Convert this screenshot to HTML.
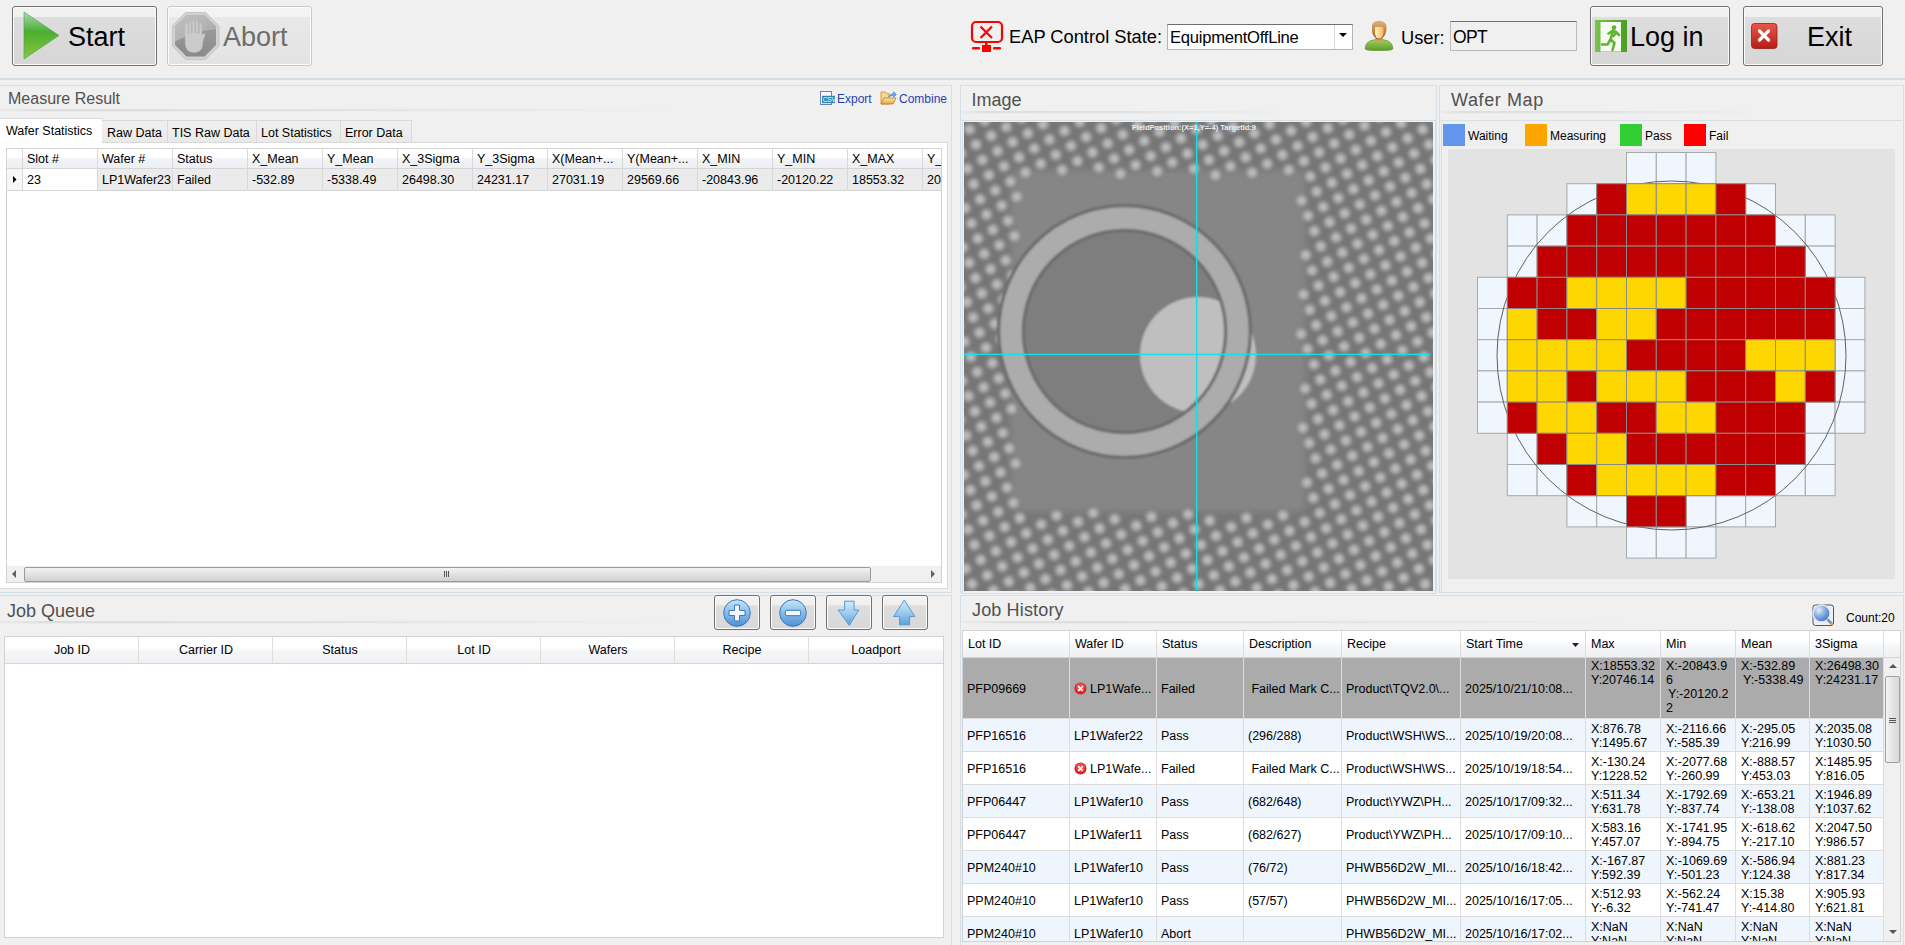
<!DOCTYPE html>
<html><head><meta charset="utf-8">
<style>
*{box-sizing:border-box;margin:0;padding:0}
html,body{width:1905px;height:945px;overflow:hidden;background:#f0f0f0;font-family:"Liberation Sans",sans-serif;color:#000}
.a{position:absolute}
.btn{position:absolute;border:1px solid #707070;border-radius:3px;background:linear-gradient(#f2f2f2 0,#f0f0f0 17%,#dddddd 18%,#d6d6d6 100%);box-shadow:inset 0 0 0 1px #fcfcfc}
.btn.dis{border-color:#c9c9c9;background:linear-gradient(#f4f4f4 0,#f2f2f2 17%,#e8e8e8 18%,#e3e3e3 100%)}
.bt{position:absolute;font-size:27px;line-height:27px;white-space:nowrap}
.panel{position:absolute;border:1px solid #d5dfe8;background:#f0f0f0}
.ptitle{position:absolute;font-size:16px;color:#505050;white-space:nowrap;line-height:20px}
.shadow{position:absolute;height:4px;background:linear-gradient(90deg,rgba(0,0,0,.03) 0,rgba(0,0,0,.11) 5%,rgba(0,0,0,.08) 35%,rgba(0,0,0,0) 72%);-webkit-mask-image:linear-gradient(rgba(0,0,0,.4) 0,#000 25%,rgba(0,0,0,.35) 50%,rgba(0,0,0,.1) 75%,rgba(0,0,0,0) 100%)}
.t12{font-size:12px;white-space:nowrap}
</style></head><body>
<!-- toolbar -->
<div class="btn" style="left:12px;top:6px;width:145px;height:60px"></div>
<svg class="a" style="left:20px;top:8px" width="44" height="56" viewBox="0 0 44 56">
<defs><linearGradient id="gPlay" x1="0" y1="0" x2="0" y2="1"><stop offset="0" stop-color="#a7d8b4"/><stop offset=".42" stop-color="#4cae2f"/><stop offset="1" stop-color="#8cc63f"/></linearGradient></defs>
<path d="M4 4 L39 27.5 L4 51 Z" fill="url(#gPlay)" stroke="#3ea55a" stroke-width=".6"/>
</svg>
<div class="bt" style="left:68px;top:24px">Start</div>

<div class="btn dis" style="left:167px;top:6px;width:145px;height:60px"></div>
<svg class="a" style="left:172px;top:12px" width="48" height="48" viewBox="0 0 48 48">
<defs><linearGradient id="gOct" x1="0" y1="0" x2="0" y2="1"><stop offset="0" stop-color="#a2a2a2"/><stop offset="1" stop-color="#8a8a8a"/></linearGradient>
<linearGradient id="gOct2" x1="0" y1="0" x2="1" y2="1"><stop offset="0" stop-color="#c4c4c4"/><stop offset="1" stop-color="#a6a6a6"/></linearGradient>
<clipPath id="cOct"><path d="M14.5 3 L32.5 3 L44 14.5 L44 33 L32.5 44.5 L14.5 44.5 L3 33 L3 14.5 Z"/></clipPath></defs>
<path d="M13.5 0.5 L33.5 0.5 L47 14 L47 34 L33.5 47.5 L13.5 47.5 L0.5 34 L0.5 14 Z" fill="#d2d2d2" stroke="#c4c4c4" stroke-width="1"/>
<path d="M14.5 3 L32.5 3 L44 14.5 L44 33 L32.5 44.5 L14.5 44.5 L3 33 L3 14.5 Z" fill="url(#gOct)"/>
<path d="M0 0 L48 0 L48 17 Q30 18 20 22 Q10 26 2 30 Z" fill="url(#gOct2)" clip-path="url(#cOct)"/>
<path d="M13 12 L13 23 L13.5 34 Q15 40.5 22 40.5 Q29 40.5 30.5 34 L31 28 L33 23.5 Q33.5 21.5 32 21.5 L30 23 L29.5 12 Q28.5 10.5 27.5 12 L27.5 21 L26 21 L26 9.5 Q25 8 24 9.5 L24 21 L22.5 21 L22.5 9 Q21.5 7.5 20.5 9 L20.5 21 L19 21 L19 10.5 Q18 9 17 10.5 L17 22 L16 22 L16 12 Q14.5 10.5 13 12 Z" fill="#cbcbcb" stroke="#bdbdbd" stroke-width=".5"/>
</svg>
<div class="bt" style="left:223px;top:24px;color:#6d6d6d">Abort</div>

<svg class="a" style="left:970px;top:20px" width="34" height="34" viewBox="0 0 34 34">
<rect x="2" y="2" width="30" height="20" rx="4" fill="none" stroke="#ff0000" stroke-width="2.2"/>
<path d="M10.5 6.5 L22 18 M22 6.5 L10.5 18" stroke="#ff0000" stroke-width="2.2"/>
<rect x="15" y="22" width="2.5" height="3" fill="#ff0000"/>
<rect x="12" y="25" width="9" height="7" fill="#ff0000"/>
<rect x="2" y="27" width="8" height="2.5" rx="1" fill="#ff0000"/>
<rect x="23" y="27" width="8" height="2.5" rx="1" fill="#ff0000"/>
</svg>
<div class="a" style="left:1009px;top:27px;font-size:18.3px;line-height:20px;white-space:nowrap">EAP Control State:</div>
<div class="a" style="left:1167px;top:24px;width:186px;height:26px;border:1px solid #b4b4b4;border-top-color:#6e6e6e;background:#fff"></div>
<div class="a" style="left:1334px;top:25px;width:1px;height:24px;background:#d9d9d9"></div>
<svg class="a" style="left:1339px;top:33px" width="9" height="5"><path d="M0 0 L8 0 L4 4 Z" fill="#000"/></svg>
<div class="a" style="left:1170px;top:28px;font-size:16.6px;line-height:20px;white-space:nowrap;letter-spacing:-0.25px">EquipmentOffLine</div>

<svg class="a" style="left:1362px;top:19px" width="34" height="34" viewBox="0 0 34 34">
<defs><linearGradient id="gBody" x1="0" y1="0" x2="0" y2="1"><stop offset="0" stop-color="#9fd060"/><stop offset="1" stop-color="#5f9a26"/></linearGradient>
<linearGradient id="gFace" x1="0" y1="0" x2="1" y2="0"><stop offset="0" stop-color="#fff3c8"/><stop offset="1" stop-color="#f2b85a"/></linearGradient>
<linearGradient id="gHair" x1="0" y1="0" x2="0" y2="1"><stop offset="0" stop-color="#e2b47a"/><stop offset="1" stop-color="#a55a1c"/></linearGradient></defs>
<path d="M3.2 30 Q3 24 9 21.5 L14 20.5 L20 20.5 L25 21.5 Q31 24 30.8 30 Q30 31.5 17 31.5 Q4 31.5 3.2 30 Z" fill="url(#gBody)" stroke="#4f8a1c" stroke-width=".6"/>
<path d="M13.5 17 L13.8 21.5 Q17 23.5 20.2 21.5 L20.5 17 Z" fill="#d49a5e"/>
<path d="M10 9 Q9 2 17 1.8 Q25 2 24.5 9 Q24.5 15 21.5 18 Q19.5 20.5 17 20.5 Q14.5 20.5 12.5 18 Q9.5 15 10 9 Z" fill="url(#gHair)"/>
<path d="M13 8.5 Q17 7.2 21.5 8.5 L21.5 14 Q20.5 19.5 17 19.5 Q13.5 19.5 13 14 Z" fill="url(#gFace)"/>
</svg>
<div class="a" style="left:1401px;top:27.5px;font-size:18.3px;line-height:20px;white-space:nowrap">User:</div>
<div class="a" style="left:1450px;top:21px;width:127px;height:30px;border:1px solid #bcbcbc;border-top-color:#6e6e6e;background:#f0f0f0"></div>
<div class="a" style="left:1453px;top:27px;font-size:17.5px;line-height:20px;white-space:nowrap;letter-spacing:-0.6px">OPT</div>

<div class="btn" style="left:1590px;top:6px;width:140px;height:60px"></div>
<svg class="a" style="left:1595px;top:20px" width="32" height="32" viewBox="0 0 32 32">
<defs><linearGradient id="gEx" x1="0" y1="0" x2="1" y2="0"><stop offset="0" stop-color="#7cc24a"/><stop offset="1" stop-color="#4a9e22"/></linearGradient></defs>
<rect x="0" y="0" width="32" height="32" fill="url(#gEx)"/>
<rect x="5.5" y="2" width="20.5" height="29.5" fill="#f6fbf2"/>
<circle cx="19" cy="7.6" r="2.3" fill="#5fb52f"/>
<path d="M13.5 13.5 L18 10.5 L21.5 12.5 L24 15 M18 10.5 L15.5 19.5 L19.5 23 L17.5 30 M15.5 19.5 L12.5 24.5 L7 24.5 M21.5 12.5 L18.5 16" stroke="#5fb52f" stroke-width="2.6" fill="none" stroke-linecap="round" stroke-linejoin="round"/>
</svg>
<div class="bt" style="left:1630px;top:24px">Log in</div>

<div class="btn" style="left:1743px;top:6px;width:140px;height:60px"></div>
<svg class="a" style="left:1751px;top:23px" width="27" height="26" viewBox="0 0 27 26">
<defs><linearGradient id="gX" x1="0" y1="0" x2="0" y2="1"><stop offset="0" stop-color="#e8574c"/><stop offset="1" stop-color="#b51d16"/></linearGradient></defs>
<rect x=".5" y=".5" width="25.5" height="25" rx="3" fill="url(#gX)" stroke="#9c1a14" stroke-width=".8"/>
<path d="M8.5 8 L17.5 17 M17.5 8 L8.5 17" stroke="#fff" stroke-width="3.2" stroke-linecap="round"/>
</svg>
<div class="bt" style="left:1807px;top:24px">Exit</div>

<div class="a" style="left:0;top:78px;width:1905px;height:2px;background:#d4dee6"></div>

<!-- PANELS -->
<div class="a" style="left:-1px;top:85px;width:953px;height:508px;border:1px solid #d5dfe8;background:#f0f0f0"></div>
<div class="ptitle" style="left:8px;top:89px">Measure Result</div>
<div class="shadow" style="left:0;top:109px;width:950px"></div>
<svg class="a" style="left:820px;top:91px" width="17" height="15" viewBox="0 0 17 15">
<rect x=".5" y=".5" width="11" height="13" fill="#f8f8fc" stroke="#7080b8"/><rect x="2" y="4.8" width="13" height="7.4" fill="#2e88b4"/><text x="2.8" y="11" font-size="6.6" fill="#fff" font-family="Liberation Sans" letter-spacing="-.2">CSV</text></svg>
<div class="a t12" style="left:837px;top:92px;color:#2b3fb0;line-height:14px">Export</div>
<svg class="a" style="left:880px;top:90px" width="18" height="16" viewBox="0 0 18 16">
<defs><linearGradient id="gFo" x1="0" y1="0" x2="0" y2="1"><stop offset="0" stop-color="#fde9a8"/><stop offset="1" stop-color="#e9a03c"/></linearGradient></defs>
<path d="M1 2 L5.5 2 L7 3.5 L9 3.5 L9 14 L1 14 Z" fill="#f6d88a" stroke="#d18a2e" stroke-width=".8"/><path d="M1 14 L4 8 L16 8 L13 14 Z" fill="url(#gFo)" stroke="#c47a25" stroke-width=".8"/><path d="M8.5 7 Q10 3.5 13.5 3.5 L13.5 1.5 L16.5 4.5 L13.5 7.5 L13.5 5.5 Q11 5.5 8.5 7 Z" fill="#6aa8e0" stroke="#3f7fc0" stroke-width=".5"/></svg>
<div class="a t12" style="left:899px;top:92px;color:#2b3fb0;line-height:14px">Combine</div>
<div class="a" style="left:0;top:142px;width:948px;height:447px;border:1px solid #d9d9d9;border-left:none;background:#fff"></div>
<div class="a" style="left:-1px;top:118px;width:104px;height:25px;border:1px solid #d9d9d9;border-bottom:none;background:#fff"></div>
<div class="a" style="left:6px;top:122.5px;font-size:12.5px;line-height:16px;white-space:nowrap">Wafer Statistics</div>
<div class="a" style="left:102px;top:120px;width:66px;height:23px;border:1px solid #d9d9d9;border-left:none;background:linear-gradient(#f0f0f0,#e9e9e9)"></div>
<div class="a" style="left:107px;top:124.5px;font-size:12.5px;line-height:16px;white-space:nowrap">Raw Data</div>
<div class="a" style="left:167px;top:120px;width:90px;height:23px;border:1px solid #d9d9d9;border-left:1px solid #d9d9d9;background:linear-gradient(#f0f0f0,#e9e9e9)"></div>
<div class="a" style="left:172px;top:124.5px;font-size:12.5px;line-height:16px;white-space:nowrap">TIS Raw Data</div>
<div class="a" style="left:256px;top:120px;width:85px;height:23px;border:1px solid #d9d9d9;border-left:1px solid #d9d9d9;background:linear-gradient(#f0f0f0,#e9e9e9)"></div>
<div class="a" style="left:261px;top:124.5px;font-size:12.5px;line-height:16px;white-space:nowrap">Lot Statistics</div>
<div class="a" style="left:340px;top:120px;width:72px;height:23px;border:1px solid #d9d9d9;border-left:1px solid #d9d9d9;background:linear-gradient(#f0f0f0,#e9e9e9)"></div>
<div class="a" style="left:345px;top:124.5px;font-size:12.5px;line-height:16px;white-space:nowrap">Error Data</div>
<div class="a" style="left:6px;top:148px;width:936px;height:435px;border:1px solid #d2d2d2;background:#fff;overflow:hidden">
<div class="a" style="left:0;top:0;width:934px;height:20px;background:linear-gradient(#fff 0,#fff 45%,#f3f5f8 50%,#eceff3 100%);border-bottom:1px solid #d5d5d5"></div>
<div class="a" style="left:0;top:20px;width:934px;height:22px;background:#ebebeb;border-bottom:1px solid #d5d5d5"></div>
<div class="a" style="left:0;top:20px;width:15px;height:21px;background:#f7f7f7"></div>
<div class="a" style="left:16px;top:20px;width:75px;height:21px;background:#fff"></div>
<svg class="a" style="left:6px;top:27px" width="4" height="7"><path d="M0 0 L3.5 3.5 L0 7 Z" fill="#000"/></svg>
<div class="a" style="left:15px;top:0;width:1px;height:42px;background:#d8d8d8"></div>
<div class="a" style="left:90px;top:0;width:1px;height:42px;background:#d8d8d8"></div>
<div class="a" style="left:165px;top:0;width:1px;height:42px;background:#d8d8d8"></div>
<div class="a" style="left:240px;top:0;width:1px;height:42px;background:#d8d8d8"></div>
<div class="a" style="left:315px;top:0;width:1px;height:42px;background:#d8d8d8"></div>
<div class="a" style="left:390px;top:0;width:1px;height:42px;background:#d8d8d8"></div>
<div class="a" style="left:465px;top:0;width:1px;height:42px;background:#d8d8d8"></div>
<div class="a" style="left:540px;top:0;width:1px;height:42px;background:#d8d8d8"></div>
<div class="a" style="left:615px;top:0;width:1px;height:42px;background:#d8d8d8"></div>
<div class="a" style="left:690px;top:0;width:1px;height:42px;background:#d8d8d8"></div>
<div class="a" style="left:765px;top:0;width:1px;height:42px;background:#d8d8d8"></div>
<div class="a" style="left:840px;top:0;width:1px;height:42px;background:#d8d8d8"></div>
<div class="a" style="left:915px;top:0;width:1px;height:42px;background:#d8d8d8"></div>
<div class="a" style="left:990px;top:0;width:1px;height:42px;background:#d8d8d8"></div>
<div class="a" style="left:20px;top:3px;font-size:12.5px;line-height:15px;white-space:nowrap">Slot #</div>
<div class="a" style="left:20px;top:24px;font-size:12.5px;line-height:15px;white-space:nowrap">23</div>
<div class="a" style="left:95px;top:3px;font-size:12.5px;line-height:15px;white-space:nowrap">Wafer #</div>
<div class="a" style="left:95px;top:24px;font-size:12.5px;line-height:15px;white-space:nowrap">LP1Wafer23</div>
<div class="a" style="left:170px;top:3px;font-size:12.5px;line-height:15px;white-space:nowrap">Status</div>
<div class="a" style="left:170px;top:24px;font-size:12.5px;line-height:15px;white-space:nowrap">Failed</div>
<div class="a" style="left:245px;top:3px;font-size:12.5px;line-height:15px;white-space:nowrap">X_Mean</div>
<div class="a" style="left:245px;top:24px;font-size:12.5px;line-height:15px;white-space:nowrap">-532.89</div>
<div class="a" style="left:320px;top:3px;font-size:12.5px;line-height:15px;white-space:nowrap">Y_Mean</div>
<div class="a" style="left:320px;top:24px;font-size:12.5px;line-height:15px;white-space:nowrap">-5338.49</div>
<div class="a" style="left:395px;top:3px;font-size:12.5px;line-height:15px;white-space:nowrap">X_3Sigma</div>
<div class="a" style="left:395px;top:24px;font-size:12.5px;line-height:15px;white-space:nowrap">26498.30</div>
<div class="a" style="left:470px;top:3px;font-size:12.5px;line-height:15px;white-space:nowrap">Y_3Sigma</div>
<div class="a" style="left:470px;top:24px;font-size:12.5px;line-height:15px;white-space:nowrap">24231.17</div>
<div class="a" style="left:545px;top:3px;font-size:12.5px;line-height:15px;white-space:nowrap">X(Mean+...</div>
<div class="a" style="left:545px;top:24px;font-size:12.5px;line-height:15px;white-space:nowrap">27031.19</div>
<div class="a" style="left:620px;top:3px;font-size:12.5px;line-height:15px;white-space:nowrap">Y(Mean+...</div>
<div class="a" style="left:620px;top:24px;font-size:12.5px;line-height:15px;white-space:nowrap">29569.66</div>
<div class="a" style="left:695px;top:3px;font-size:12.5px;line-height:15px;white-space:nowrap">X_MIN</div>
<div class="a" style="left:695px;top:24px;font-size:12.5px;line-height:15px;white-space:nowrap">-20843.96</div>
<div class="a" style="left:770px;top:3px;font-size:12.5px;line-height:15px;white-space:nowrap">Y_MIN</div>
<div class="a" style="left:770px;top:24px;font-size:12.5px;line-height:15px;white-space:nowrap">-20120.22</div>
<div class="a" style="left:845px;top:3px;font-size:12.5px;line-height:15px;white-space:nowrap">X_MAX</div>
<div class="a" style="left:845px;top:24px;font-size:12.5px;line-height:15px;white-space:nowrap">18553.32</div>
<div class="a" style="left:920px;top:3px;font-size:12.5px;line-height:15px;white-space:nowrap">Y_</div>
<div class="a" style="left:920px;top:24px;font-size:12.5px;line-height:15px;white-space:nowrap">20</div>
<div class="a" style="left:0;top:417px;width:934px;height:16px;background:#f0f0f0"></div>
<svg class="a" style="left:5px;top:421px" width="5" height="8"><path d="M4 0 L0 4 L4 8 Z" fill="#606060"/></svg>
<svg class="a" style="left:924px;top:421px" width="5" height="8"><path d="M0 0 L4 4 L0 8 Z" fill="#606060"/></svg>
<div class="a" style="left:17px;top:418px;width:847px;height:15px;border:1px solid #9a9a9a;border-radius:2px;background:linear-gradient(#f2f2f2,#e2e2e2 50%,#d0d0d0)"></div>
<div class="a" style="left:437px;top:422px;width:1px;height:6px;background:#555;box-shadow:2px 0 0 #555,4px 0 0 #555"></div>
</div>
<div class="a" style="left:960px;top:85px;width:477px;height:508px;border:1px solid #d5dfe8;background:#f0f0f0"></div>
<div class="ptitle" style="left:971.5px;top:90px;font-size:18px">Image</div>
<div class="shadow" style="left:962px;top:111px;width:470px"></div>
<div class="a" style="left:962px;top:120px;width:474px;height:474px;border:1px solid #d5dfe8;background:#eef2f6"></div>
<svg class="a" style="left:964px;top:122px" width="469" height="469" viewBox="964 122 469 469"><defs>
<filter id="bl" x="-20%" y="-20%" width="140%" height="140%"><feGaussianBlur stdDeviation="1.3"/></filter>
<filter id="bld" x="0" y="0" width="100%" height="100%"><feGaussianBlur stdDeviation="2"/></filter>
<filter id="bl2" x="-20%" y="-20%" width="140%" height="140%"><feGaussianBlur stdDeviation="3.5"/></filter>
</defs><rect x="964" y="122" width="469" height="469" fill="#767676"/><rect x="1010" y="170" width="296" height="342" rx="8" fill="#868686" filter="url(#bl2)"/><g fill="#bdbdbd" stroke="#6e6e6e" stroke-width="1.8" filter="url(#bld)"><circle cx="956.9" cy="593.0" r="6"/><circle cx="959.2" cy="553.7" r="6"/><circle cx="965.6" cy="568.9" r="6"/><circle cx="972.1" cy="584.1" r="6"/><circle cx="961.6" cy="514.3" r="6"/><circle cx="968.0" cy="529.5" r="6"/><circle cx="974.4" cy="544.8" r="6"/><circle cx="980.8" cy="560.0" r="6"/><circle cx="987.2" cy="575.3" r="6"/><circle cx="993.6" cy="590.5" r="6"/><circle cx="957.5" cy="459.7" r="6"/><circle cx="963.9" cy="474.9" r="6"/><circle cx="970.3" cy="490.2" r="6"/><circle cx="976.7" cy="505.4" r="6"/><circle cx="983.1" cy="520.6" r="6"/><circle cx="989.5" cy="535.9" r="6"/><circle cx="995.9" cy="551.1" r="6"/><circle cx="1002.3" cy="566.4" r="6"/><circle cx="1008.8" cy="581.6" r="6"/><circle cx="1015.2" cy="596.9" r="6"/><circle cx="959.8" cy="420.3" r="6"/><circle cx="966.2" cy="435.6" r="6"/><circle cx="972.6" cy="450.8" r="6"/><circle cx="979.0" cy="466.0" r="6"/><circle cx="985.4" cy="481.3" r="6"/><circle cx="991.8" cy="496.5" r="6"/><circle cx="998.2" cy="511.8" r="6"/><circle cx="1004.7" cy="527.0" r="6"/><circle cx="1011.1" cy="542.2" r="6"/><circle cx="1017.5" cy="557.5" r="6"/><circle cx="1023.9" cy="572.7" r="6"/><circle cx="1030.3" cy="588.0" r="6"/><circle cx="962.1" cy="381.0" r="6"/><circle cx="968.5" cy="396.2" r="6"/><circle cx="974.9" cy="411.4" r="6"/><circle cx="981.3" cy="426.7" r="6"/><circle cx="987.8" cy="441.9" r="6"/><circle cx="994.2" cy="457.1" r="6"/><circle cx="1000.6" cy="472.4" r="6"/><circle cx="1007.0" cy="487.6" r="6"/><circle cx="1013.4" cy="502.9" r="6"/><circle cx="1019.8" cy="518.1" r="6"/><circle cx="1026.2" cy="533.4" r="6"/><circle cx="1032.6" cy="548.6" r="6"/><circle cx="1039.0" cy="563.8" r="6"/><circle cx="1045.4" cy="579.1" r="6"/><circle cx="1051.8" cy="594.3" r="6"/><circle cx="958.0" cy="326.3" r="6"/><circle cx="964.4" cy="341.6" r="6"/><circle cx="970.8" cy="356.8" r="6"/><circle cx="977.2" cy="372.1" r="6"/><circle cx="983.7" cy="387.3" r="6"/><circle cx="990.1" cy="402.5" r="6"/><circle cx="996.5" cy="417.8" r="6"/><circle cx="1002.9" cy="433.0" r="6"/><circle cx="1009.3" cy="448.3" r="6"/><circle cx="1015.7" cy="463.5" r="6"/><circle cx="1041.3" cy="524.5" r="6"/><circle cx="1047.8" cy="539.7" r="6"/><circle cx="1054.2" cy="554.9" r="6"/><circle cx="1060.6" cy="570.2" r="6"/><circle cx="1067.0" cy="585.4" r="6"/><circle cx="960.3" cy="287.0" r="6"/><circle cx="966.8" cy="302.2" r="6"/><circle cx="973.2" cy="317.5" r="6"/><circle cx="979.6" cy="332.7" r="6"/><circle cx="986.0" cy="347.9" r="6"/><circle cx="992.4" cy="363.2" r="6"/><circle cx="998.8" cy="378.4" r="6"/><circle cx="1005.2" cy="393.6" r="6"/><circle cx="1011.6" cy="408.9" r="6"/><circle cx="1056.5" cy="515.6" r="6"/><circle cx="1062.9" cy="530.8" r="6"/><circle cx="1069.3" cy="546.0" r="6"/><circle cx="1075.7" cy="561.3" r="6"/><circle cx="1082.1" cy="576.5" r="6"/><circle cx="1088.5" cy="591.8" r="6"/><circle cx="956.2" cy="232.4" r="6"/><circle cx="962.7" cy="247.6" r="6"/><circle cx="969.1" cy="262.8" r="6"/><circle cx="975.5" cy="278.1" r="6"/><circle cx="981.9" cy="293.3" r="6"/><circle cx="988.3" cy="308.6" r="6"/><circle cx="994.7" cy="323.8" r="6"/><circle cx="1001.1" cy="339.0" r="6"/><circle cx="1007.5" cy="354.3" r="6"/><circle cx="1013.9" cy="369.5" r="6"/><circle cx="1078.0" cy="521.9" r="6"/><circle cx="1084.5" cy="537.2" r="6"/><circle cx="1090.9" cy="552.4" r="6"/><circle cx="1097.3" cy="567.6" r="6"/><circle cx="1103.7" cy="582.9" r="6"/><circle cx="1110.1" cy="598.1" r="6"/><circle cx="958.6" cy="193.0" r="6"/><circle cx="965.0" cy="208.2" r="6"/><circle cx="971.4" cy="223.5" r="6"/><circle cx="977.8" cy="238.7" r="6"/><circle cx="984.2" cy="253.9" r="6"/><circle cx="990.6" cy="269.2" r="6"/><circle cx="997.0" cy="284.4" r="6"/><circle cx="1003.4" cy="299.7" r="6"/><circle cx="1009.9" cy="314.9" r="6"/><circle cx="1016.3" cy="330.2" r="6"/><circle cx="1093.2" cy="513.0" r="6"/><circle cx="1099.6" cy="528.3" r="6"/><circle cx="1106.0" cy="543.5" r="6"/><circle cx="1112.4" cy="558.8" r="6"/><circle cx="1118.8" cy="574.0" r="6"/><circle cx="1125.2" cy="589.2" r="6"/><circle cx="960.9" cy="153.6" r="6"/><circle cx="967.3" cy="168.9" r="6"/><circle cx="973.7" cy="184.1" r="6"/><circle cx="980.1" cy="199.3" r="6"/><circle cx="986.5" cy="214.6" r="6"/><circle cx="992.9" cy="229.8" r="6"/><circle cx="999.4" cy="245.1" r="6"/><circle cx="1005.8" cy="260.3" r="6"/><circle cx="1012.2" cy="275.5" r="6"/><circle cx="1114.7" cy="519.4" r="6"/><circle cx="1121.1" cy="534.6" r="6"/><circle cx="1127.6" cy="549.9" r="6"/><circle cx="1134.0" cy="565.1" r="6"/><circle cx="1140.4" cy="580.3" r="6"/><circle cx="1146.8" cy="595.6" r="6"/><circle cx="963.2" cy="114.3" r="6"/><circle cx="969.6" cy="129.5" r="6"/><circle cx="976.0" cy="144.7" r="6"/><circle cx="982.4" cy="160.0" r="6"/><circle cx="988.9" cy="175.2" r="6"/><circle cx="995.3" cy="190.5" r="6"/><circle cx="1001.7" cy="205.7" r="6"/><circle cx="1008.1" cy="220.9" r="6"/><circle cx="1014.5" cy="236.2" r="6"/><circle cx="1136.3" cy="525.7" r="6"/><circle cx="1142.7" cy="541.0" r="6"/><circle cx="1149.1" cy="556.2" r="6"/><circle cx="1155.5" cy="571.5" r="6"/><circle cx="1161.9" cy="586.7" r="6"/><circle cx="984.8" cy="120.6" r="6"/><circle cx="991.2" cy="135.8" r="6"/><circle cx="997.6" cy="151.1" r="6"/><circle cx="1004.0" cy="166.3" r="6"/><circle cx="1010.4" cy="181.6" r="6"/><circle cx="1016.8" cy="196.8" r="6"/><circle cx="1151.4" cy="516.8" r="6"/><circle cx="1157.8" cy="532.1" r="6"/><circle cx="1164.2" cy="547.3" r="6"/><circle cx="1170.7" cy="562.6" r="6"/><circle cx="1177.1" cy="577.8" r="6"/><circle cx="1183.5" cy="593.0" r="6"/><circle cx="1006.3" cy="127.0" r="6"/><circle cx="1012.7" cy="142.2" r="6"/><circle cx="1019.1" cy="157.4" r="6"/><circle cx="1025.5" cy="172.7" r="6"/><circle cx="1173.0" cy="523.2" r="6"/><circle cx="1179.4" cy="538.4" r="6"/><circle cx="1185.8" cy="553.7" r="6"/><circle cx="1192.2" cy="568.9" r="6"/><circle cx="1198.6" cy="584.1" r="6"/><circle cx="1021.4" cy="118.1" r="6"/><circle cx="1027.9" cy="133.3" r="6"/><circle cx="1034.3" cy="148.5" r="6"/><circle cx="1040.7" cy="163.8" r="6"/><circle cx="1188.1" cy="514.3" r="6"/><circle cx="1194.5" cy="529.5" r="6"/><circle cx="1200.9" cy="544.8" r="6"/><circle cx="1207.3" cy="560.0" r="6"/><circle cx="1213.8" cy="575.3" r="6"/><circle cx="1220.2" cy="590.5" r="6"/><circle cx="1043.0" cy="124.4" r="6"/><circle cx="1049.4" cy="139.7" r="6"/><circle cx="1055.8" cy="154.9" r="6"/><circle cx="1062.2" cy="170.1" r="6"/><circle cx="1209.7" cy="520.6" r="6"/><circle cx="1216.1" cy="535.9" r="6"/><circle cx="1222.5" cy="551.1" r="6"/><circle cx="1228.9" cy="566.4" r="6"/><circle cx="1235.3" cy="581.6" r="6"/><circle cx="1241.7" cy="596.9" r="6"/><circle cx="1058.1" cy="115.5" r="6"/><circle cx="1064.5" cy="130.8" r="6"/><circle cx="1071.0" cy="146.0" r="6"/><circle cx="1077.4" cy="161.2" r="6"/><circle cx="1231.2" cy="527.0" r="6"/><circle cx="1237.6" cy="542.2" r="6"/><circle cx="1244.0" cy="557.5" r="6"/><circle cx="1250.4" cy="572.7" r="6"/><circle cx="1256.8" cy="588.0" r="6"/><circle cx="1079.7" cy="121.9" r="6"/><circle cx="1086.1" cy="137.1" r="6"/><circle cx="1092.5" cy="152.3" r="6"/><circle cx="1098.9" cy="167.6" r="6"/><circle cx="1246.4" cy="518.1" r="6"/><circle cx="1252.8" cy="533.4" r="6"/><circle cx="1259.2" cy="548.6" r="6"/><circle cx="1265.6" cy="563.8" r="6"/><circle cx="1272.0" cy="579.1" r="6"/><circle cx="1278.4" cy="594.3" r="6"/><circle cx="1101.2" cy="128.2" r="6"/><circle cx="1107.7" cy="143.5" r="6"/><circle cx="1114.1" cy="158.7" r="6"/><circle cx="1120.5" cy="173.9" r="6"/><circle cx="1267.9" cy="524.5" r="6"/><circle cx="1274.3" cy="539.7" r="6"/><circle cx="1280.7" cy="554.9" r="6"/><circle cx="1287.1" cy="570.2" r="6"/><circle cx="1293.5" cy="585.4" r="6"/><circle cx="1116.4" cy="119.3" r="6"/><circle cx="1122.8" cy="134.6" r="6"/><circle cx="1129.2" cy="149.8" r="6"/><circle cx="1135.6" cy="165.1" r="6"/><circle cx="1283.0" cy="515.6" r="6"/><circle cx="1289.5" cy="530.8" r="6"/><circle cx="1295.9" cy="546.0" r="6"/><circle cx="1302.3" cy="561.3" r="6"/><circle cx="1308.7" cy="576.5" r="6"/><circle cx="1315.1" cy="591.8" r="6"/><circle cx="1137.9" cy="125.7" r="6"/><circle cx="1144.3" cy="140.9" r="6"/><circle cx="1150.8" cy="156.2" r="6"/><circle cx="1157.2" cy="171.4" r="6"/><circle cx="1304.6" cy="521.9" r="6"/><circle cx="1311.0" cy="537.2" r="6"/><circle cx="1317.4" cy="552.4" r="6"/><circle cx="1323.8" cy="567.6" r="6"/><circle cx="1330.2" cy="582.9" r="6"/><circle cx="1336.6" cy="598.1" r="6"/><circle cx="1153.1" cy="116.8" r="6"/><circle cx="1159.5" cy="132.0" r="6"/><circle cx="1165.9" cy="147.3" r="6"/><circle cx="1172.3" cy="162.5" r="6"/><circle cx="1306.9" cy="482.6" r="6"/><circle cx="1313.3" cy="497.8" r="6"/><circle cx="1319.7" cy="513.0" r="6"/><circle cx="1326.1" cy="528.3" r="6"/><circle cx="1332.5" cy="543.5" r="6"/><circle cx="1339.0" cy="558.8" r="6"/><circle cx="1345.4" cy="574.0" r="6"/><circle cx="1351.8" cy="589.2" r="6"/><circle cx="1174.6" cy="123.1" r="6"/><circle cx="1181.0" cy="138.4" r="6"/><circle cx="1187.4" cy="153.6" r="6"/><circle cx="1193.9" cy="168.9" r="6"/><circle cx="1302.8" cy="427.9" r="6"/><circle cx="1309.2" cy="443.2" r="6"/><circle cx="1315.6" cy="458.4" r="6"/><circle cx="1322.1" cy="473.7" r="6"/><circle cx="1328.5" cy="488.9" r="6"/><circle cx="1334.9" cy="504.1" r="6"/><circle cx="1341.3" cy="519.4" r="6"/><circle cx="1347.7" cy="534.6" r="6"/><circle cx="1354.1" cy="549.9" r="6"/><circle cx="1360.5" cy="565.1" r="6"/><circle cx="1366.9" cy="580.3" r="6"/><circle cx="1373.3" cy="595.6" r="6"/><circle cx="1189.8" cy="114.2" r="6"/><circle cx="1196.2" cy="129.5" r="6"/><circle cx="1202.6" cy="144.7" r="6"/><circle cx="1209.0" cy="160.0" r="6"/><circle cx="1215.4" cy="175.2" r="6"/><circle cx="1305.1" cy="388.6" r="6"/><circle cx="1311.5" cy="403.8" r="6"/><circle cx="1318.0" cy="419.1" r="6"/><circle cx="1324.4" cy="434.3" r="6"/><circle cx="1330.8" cy="449.5" r="6"/><circle cx="1337.2" cy="464.8" r="6"/><circle cx="1343.6" cy="480.0" r="6"/><circle cx="1350.0" cy="495.2" r="6"/><circle cx="1356.4" cy="510.5" r="6"/><circle cx="1362.8" cy="525.7" r="6"/><circle cx="1369.2" cy="541.0" r="6"/><circle cx="1375.7" cy="556.2" r="6"/><circle cx="1382.1" cy="571.5" r="6"/><circle cx="1388.5" cy="586.7" r="6"/><circle cx="1211.3" cy="120.6" r="6"/><circle cx="1217.7" cy="135.8" r="6"/><circle cx="1224.1" cy="151.1" r="6"/><circle cx="1230.5" cy="166.3" r="6"/><circle cx="1301.0" cy="334.0" r="6"/><circle cx="1307.5" cy="349.2" r="6"/><circle cx="1313.9" cy="364.4" r="6"/><circle cx="1320.3" cy="379.7" r="6"/><circle cx="1326.7" cy="394.9" r="6"/><circle cx="1333.1" cy="410.2" r="6"/><circle cx="1339.5" cy="425.4" r="6"/><circle cx="1345.9" cy="440.6" r="6"/><circle cx="1352.3" cy="455.9" r="6"/><circle cx="1358.7" cy="471.1" r="6"/><circle cx="1365.2" cy="486.4" r="6"/><circle cx="1371.6" cy="501.6" r="6"/><circle cx="1378.0" cy="516.8" r="6"/><circle cx="1384.4" cy="532.1" r="6"/><circle cx="1390.8" cy="547.3" r="6"/><circle cx="1397.2" cy="562.6" r="6"/><circle cx="1403.6" cy="577.8" r="6"/><circle cx="1410.0" cy="593.0" r="6"/><circle cx="1232.9" cy="126.9" r="6"/><circle cx="1239.3" cy="142.2" r="6"/><circle cx="1245.7" cy="157.4" r="6"/><circle cx="1252.1" cy="172.7" r="6"/><circle cx="1303.4" cy="294.6" r="6"/><circle cx="1309.8" cy="309.8" r="6"/><circle cx="1316.2" cy="325.1" r="6"/><circle cx="1322.6" cy="340.3" r="6"/><circle cx="1329.0" cy="355.5" r="6"/><circle cx="1335.4" cy="370.8" r="6"/><circle cx="1341.8" cy="386.0" r="6"/><circle cx="1348.2" cy="401.3" r="6"/><circle cx="1354.6" cy="416.5" r="6"/><circle cx="1361.1" cy="431.8" r="6"/><circle cx="1367.5" cy="447.0" r="6"/><circle cx="1373.9" cy="462.2" r="6"/><circle cx="1380.3" cy="477.5" r="6"/><circle cx="1386.7" cy="492.7" r="6"/><circle cx="1393.1" cy="507.9" r="6"/><circle cx="1399.5" cy="523.2" r="6"/><circle cx="1405.9" cy="538.4" r="6"/><circle cx="1412.3" cy="553.7" r="6"/><circle cx="1418.8" cy="568.9" r="6"/><circle cx="1425.2" cy="584.1" r="6"/><circle cx="1248.0" cy="118.1" r="6"/><circle cx="1254.4" cy="133.3" r="6"/><circle cx="1260.8" cy="148.5" r="6"/><circle cx="1267.2" cy="163.8" r="6"/><circle cx="1305.7" cy="255.2" r="6"/><circle cx="1312.1" cy="270.5" r="6"/><circle cx="1318.5" cy="285.7" r="6"/><circle cx="1324.9" cy="300.9" r="6"/><circle cx="1331.3" cy="316.2" r="6"/><circle cx="1337.7" cy="331.4" r="6"/><circle cx="1344.1" cy="346.7" r="6"/><circle cx="1350.6" cy="361.9" r="6"/><circle cx="1357.0" cy="377.1" r="6"/><circle cx="1363.4" cy="392.4" r="6"/><circle cx="1369.8" cy="407.6" r="6"/><circle cx="1376.2" cy="422.9" r="6"/><circle cx="1382.6" cy="438.1" r="6"/><circle cx="1389.0" cy="453.3" r="6"/><circle cx="1395.4" cy="468.6" r="6"/><circle cx="1401.8" cy="483.8" r="6"/><circle cx="1408.2" cy="499.1" r="6"/><circle cx="1414.7" cy="514.3" r="6"/><circle cx="1421.1" cy="529.5" r="6"/><circle cx="1427.5" cy="544.8" r="6"/><circle cx="1433.9" cy="560.0" r="6"/><circle cx="1440.3" cy="575.3" r="6"/><circle cx="1269.6" cy="124.4" r="6"/><circle cx="1276.0" cy="139.7" r="6"/><circle cx="1282.4" cy="154.9" r="6"/><circle cx="1288.8" cy="170.1" r="6"/><circle cx="1301.6" cy="200.6" r="6"/><circle cx="1308.0" cy="215.8" r="6"/><circle cx="1314.4" cy="231.1" r="6"/><circle cx="1320.8" cy="246.3" r="6"/><circle cx="1327.2" cy="261.6" r="6"/><circle cx="1333.7" cy="276.8" r="6"/><circle cx="1340.1" cy="292.1" r="6"/><circle cx="1346.5" cy="307.3" r="6"/><circle cx="1352.9" cy="322.5" r="6"/><circle cx="1359.3" cy="337.8" r="6"/><circle cx="1365.7" cy="353.0" r="6"/><circle cx="1372.1" cy="368.2" r="6"/><circle cx="1378.5" cy="383.5" r="6"/><circle cx="1384.9" cy="398.7" r="6"/><circle cx="1391.3" cy="414.0" r="6"/><circle cx="1397.8" cy="429.2" r="6"/><circle cx="1404.2" cy="444.5" r="6"/><circle cx="1410.6" cy="459.7" r="6"/><circle cx="1417.0" cy="474.9" r="6"/><circle cx="1423.4" cy="490.2" r="6"/><circle cx="1429.8" cy="505.4" r="6"/><circle cx="1436.2" cy="520.6" r="6"/><circle cx="1284.7" cy="115.5" r="6"/><circle cx="1291.1" cy="130.8" r="6"/><circle cx="1297.5" cy="146.0" r="6"/><circle cx="1303.9" cy="161.2" r="6"/><circle cx="1310.3" cy="176.5" r="6"/><circle cx="1316.7" cy="191.7" r="6"/><circle cx="1323.2" cy="207.0" r="6"/><circle cx="1329.6" cy="222.2" r="6"/><circle cx="1336.0" cy="237.4" r="6"/><circle cx="1342.4" cy="252.7" r="6"/><circle cx="1348.8" cy="267.9" r="6"/><circle cx="1355.2" cy="283.2" r="6"/><circle cx="1361.6" cy="298.4" r="6"/><circle cx="1368.0" cy="313.6" r="6"/><circle cx="1374.4" cy="328.9" r="6"/><circle cx="1380.8" cy="344.1" r="6"/><circle cx="1387.2" cy="359.4" r="6"/><circle cx="1393.7" cy="374.6" r="6"/><circle cx="1400.1" cy="389.8" r="6"/><circle cx="1406.5" cy="405.1" r="6"/><circle cx="1412.9" cy="420.3" r="6"/><circle cx="1419.3" cy="435.6" r="6"/><circle cx="1425.7" cy="450.8" r="6"/><circle cx="1432.1" cy="466.0" r="6"/><circle cx="1438.5" cy="481.3" r="6"/><circle cx="1306.2" cy="121.9" r="6"/><circle cx="1312.7" cy="137.1" r="6"/><circle cx="1319.1" cy="152.4" r="6"/><circle cx="1325.5" cy="167.6" r="6"/><circle cx="1331.9" cy="182.8" r="6"/><circle cx="1338.3" cy="198.1" r="6"/><circle cx="1344.7" cy="213.3" r="6"/><circle cx="1351.1" cy="228.6" r="6"/><circle cx="1357.5" cy="243.8" r="6"/><circle cx="1363.9" cy="259.0" r="6"/><circle cx="1370.3" cy="274.3" r="6"/><circle cx="1376.8" cy="289.5" r="6"/><circle cx="1383.2" cy="304.8" r="6"/><circle cx="1389.6" cy="320.0" r="6"/><circle cx="1396.0" cy="335.2" r="6"/><circle cx="1402.4" cy="350.5" r="6"/><circle cx="1408.8" cy="365.7" r="6"/><circle cx="1415.2" cy="381.0" r="6"/><circle cx="1421.6" cy="396.2" r="6"/><circle cx="1428.0" cy="411.4" r="6"/><circle cx="1434.4" cy="426.7" r="6"/><circle cx="1440.8" cy="441.9" r="6"/><circle cx="1327.8" cy="128.2" r="6"/><circle cx="1334.2" cy="143.5" r="6"/><circle cx="1340.6" cy="158.7" r="6"/><circle cx="1347.0" cy="173.9" r="6"/><circle cx="1353.4" cy="189.2" r="6"/><circle cx="1359.8" cy="204.4" r="6"/><circle cx="1366.2" cy="219.7" r="6"/><circle cx="1372.7" cy="234.9" r="6"/><circle cx="1379.1" cy="250.1" r="6"/><circle cx="1385.5" cy="265.4" r="6"/><circle cx="1391.9" cy="280.6" r="6"/><circle cx="1398.3" cy="295.9" r="6"/><circle cx="1404.7" cy="311.1" r="6"/><circle cx="1411.1" cy="326.3" r="6"/><circle cx="1417.5" cy="341.6" r="6"/><circle cx="1423.9" cy="356.8" r="6"/><circle cx="1430.3" cy="372.1" r="6"/><circle cx="1436.8" cy="387.3" r="6"/><circle cx="1342.9" cy="119.3" r="6"/><circle cx="1349.3" cy="134.6" r="6"/><circle cx="1355.8" cy="149.8" r="6"/><circle cx="1362.2" cy="165.1" r="6"/><circle cx="1368.6" cy="180.3" r="6"/><circle cx="1375.0" cy="195.5" r="6"/><circle cx="1381.4" cy="210.8" r="6"/><circle cx="1387.8" cy="226.0" r="6"/><circle cx="1394.2" cy="241.2" r="6"/><circle cx="1400.6" cy="256.5" r="6"/><circle cx="1407.0" cy="271.7" r="6"/><circle cx="1413.4" cy="287.0" r="6"/><circle cx="1419.8" cy="302.2" r="6"/><circle cx="1426.3" cy="317.4" r="6"/><circle cx="1432.7" cy="332.7" r="6"/><circle cx="1439.1" cy="347.9" r="6"/><circle cx="1364.5" cy="125.7" r="6"/><circle cx="1370.9" cy="140.9" r="6"/><circle cx="1377.3" cy="156.2" r="6"/><circle cx="1383.7" cy="171.4" r="6"/><circle cx="1390.1" cy="186.6" r="6"/><circle cx="1396.5" cy="201.9" r="6"/><circle cx="1402.9" cy="217.1" r="6"/><circle cx="1409.4" cy="232.4" r="6"/><circle cx="1415.8" cy="247.6" r="6"/><circle cx="1422.2" cy="262.8" r="6"/><circle cx="1428.6" cy="278.1" r="6"/><circle cx="1435.0" cy="293.3" r="6"/><circle cx="1379.6" cy="116.8" r="6"/><circle cx="1386.0" cy="132.0" r="6"/><circle cx="1392.4" cy="147.3" r="6"/><circle cx="1398.8" cy="162.5" r="6"/><circle cx="1405.3" cy="177.8" r="6"/><circle cx="1411.7" cy="193.0" r="6"/><circle cx="1418.1" cy="208.2" r="6"/><circle cx="1424.5" cy="223.5" r="6"/><circle cx="1430.9" cy="238.7" r="6"/><circle cx="1437.3" cy="253.9" r="6"/><circle cx="1401.2" cy="123.1" r="6"/><circle cx="1407.6" cy="138.4" r="6"/><circle cx="1414.0" cy="153.6" r="6"/><circle cx="1420.4" cy="168.9" r="6"/><circle cx="1426.8" cy="184.1" r="6"/><circle cx="1433.2" cy="199.3" r="6"/><circle cx="1439.6" cy="214.6" r="6"/><circle cx="1416.3" cy="114.2" r="6"/><circle cx="1422.7" cy="129.5" r="6"/><circle cx="1429.1" cy="144.7" r="6"/><circle cx="1435.5" cy="160.0" r="6"/><circle cx="1437.9" cy="120.6" r="6"/></g><g filter="url(#bl)"><circle cx="1124.5" cy="331.5" r="101" fill="#7e7e7e"/><circle cx="1198" cy="355" r="58" fill="#bfbfbf"/><circle cx="1124.5" cy="331.5" r="113.5" fill="none" stroke="#6c6c6c" stroke-width="28"/><circle cx="1124.5" cy="331.5" r="113.5" fill="none" stroke="#acacac" stroke-width="21.5"/></g><rect x="1196" y="122" width="1.4" height="469" fill="#12dfeb"/><rect x="964" y="353.7" width="466.5" height="1.4" fill="#12dfeb"/><text x="1194" y="129.5" text-anchor="middle" font-family="Liberation Sans" font-weight="bold" font-size="7.5" fill="#f0f0f0">FieldPosition:(X=1,Y=-4) TargetId:9</text></svg>
<div class="a" style="left:1439px;top:85px;width:465px;height:508px;border:1px solid #d5dfe8;background:#f0f0f0"></div>
<div class="ptitle" style="left:1451px;top:90px;font-size:18px;letter-spacing:.6px">Wafer Map</div>
<div class="shadow" style="left:1441px;top:111px;width:460px"></div>
<div class="a" style="left:1441px;top:120px;width:461px;height:473px;border:1px solid #d5dfe8;border-bottom:none;border-right:none"></div>
<div class="a" style="left:1443px;top:124px;width:22px;height:22px;background:#6495ed"></div>
<div class="a t12" style="left:1468px;top:129px;line-height:14px">Waiting</div>
<div class="a" style="left:1525px;top:124px;width:22px;height:22px;background:#ffa500"></div>
<div class="a t12" style="left:1550px;top:129px;line-height:14px">Measuring</div>
<div class="a" style="left:1620px;top:124px;width:22px;height:22px;background:#32cd32"></div>
<div class="a t12" style="left:1645px;top:129px;line-height:14px">Pass</div>
<div class="a" style="left:1684px;top:124px;width:22px;height:22px;background:#ff0000"></div>
<div class="a t12" style="left:1709px;top:129px;line-height:14px">Fail</div>
<div class="a" style="left:1448px;top:149px;width:447px;height:430px;background:#e3e3e3"></div>
<svg class="a" style="left:1448px;top:149px" width="447" height="430" viewBox="1448 149 447 430"><rect x="1626.5" y="152.5" width="29.8" height="31.2" fill="#eff6fd" stroke="#a8a8a8" stroke-width="1"/><rect x="1656.3" y="152.5" width="29.8" height="31.2" fill="#eff6fd" stroke="#a8a8a8" stroke-width="1"/><rect x="1686.1" y="152.5" width="29.8" height="31.2" fill="#eff6fd" stroke="#a8a8a8" stroke-width="1"/><rect x="1566.9" y="183.7" width="29.8" height="31.2" fill="#eff6fd" stroke="#a8a8a8" stroke-width="1"/><rect x="1745.7" y="183.7" width="29.8" height="31.2" fill="#eff6fd" stroke="#a8a8a8" stroke-width="1"/><rect x="1507.3" y="214.9" width="29.8" height="31.2" fill="#eff6fd" stroke="#a8a8a8" stroke-width="1"/><rect x="1537.1" y="214.9" width="29.8" height="31.2" fill="#eff6fd" stroke="#a8a8a8" stroke-width="1"/><rect x="1775.5" y="214.9" width="29.8" height="31.2" fill="#eff6fd" stroke="#a8a8a8" stroke-width="1"/><rect x="1805.3" y="214.9" width="29.8" height="31.2" fill="#eff6fd" stroke="#a8a8a8" stroke-width="1"/><rect x="1507.3" y="246.1" width="29.8" height="31.2" fill="#eff6fd" stroke="#a8a8a8" stroke-width="1"/><rect x="1805.3" y="246.1" width="29.8" height="31.2" fill="#eff6fd" stroke="#a8a8a8" stroke-width="1"/><rect x="1477.5" y="277.3" width="29.8" height="31.2" fill="#eff6fd" stroke="#a8a8a8" stroke-width="1"/><rect x="1835.1" y="277.3" width="29.8" height="31.2" fill="#eff6fd" stroke="#a8a8a8" stroke-width="1"/><rect x="1477.5" y="308.5" width="29.8" height="31.2" fill="#eff6fd" stroke="#a8a8a8" stroke-width="1"/><rect x="1835.1" y="308.5" width="29.8" height="31.2" fill="#eff6fd" stroke="#a8a8a8" stroke-width="1"/><rect x="1477.5" y="339.7" width="29.8" height="31.2" fill="#eff6fd" stroke="#a8a8a8" stroke-width="1"/><rect x="1835.1" y="339.7" width="29.8" height="31.2" fill="#eff6fd" stroke="#a8a8a8" stroke-width="1"/><rect x="1477.5" y="370.9" width="29.8" height="31.2" fill="#eff6fd" stroke="#a8a8a8" stroke-width="1"/><rect x="1835.1" y="370.9" width="29.8" height="31.2" fill="#eff6fd" stroke="#a8a8a8" stroke-width="1"/><rect x="1477.5" y="402.1" width="29.8" height="31.2" fill="#eff6fd" stroke="#a8a8a8" stroke-width="1"/><rect x="1805.3" y="402.1" width="29.8" height="31.2" fill="#eff6fd" stroke="#a8a8a8" stroke-width="1"/><rect x="1835.1" y="402.1" width="29.8" height="31.2" fill="#eff6fd" stroke="#a8a8a8" stroke-width="1"/><rect x="1507.3" y="433.3" width="29.8" height="31.2" fill="#eff6fd" stroke="#a8a8a8" stroke-width="1"/><rect x="1805.3" y="433.3" width="29.8" height="31.2" fill="#eff6fd" stroke="#a8a8a8" stroke-width="1"/><rect x="1507.3" y="464.5" width="29.8" height="31.2" fill="#eff6fd" stroke="#a8a8a8" stroke-width="1"/><rect x="1537.1" y="464.5" width="29.8" height="31.2" fill="#eff6fd" stroke="#a8a8a8" stroke-width="1"/><rect x="1775.5" y="464.5" width="29.8" height="31.2" fill="#eff6fd" stroke="#a8a8a8" stroke-width="1"/><rect x="1805.3" y="464.5" width="29.8" height="31.2" fill="#eff6fd" stroke="#a8a8a8" stroke-width="1"/><rect x="1566.9" y="495.7" width="29.8" height="31.2" fill="#eff6fd" stroke="#a8a8a8" stroke-width="1"/><rect x="1596.7" y="495.7" width="29.8" height="31.2" fill="#eff6fd" stroke="#a8a8a8" stroke-width="1"/><rect x="1686.1" y="495.7" width="29.8" height="31.2" fill="#eff6fd" stroke="#a8a8a8" stroke-width="1"/><rect x="1715.9" y="495.7" width="29.8" height="31.2" fill="#eff6fd" stroke="#a8a8a8" stroke-width="1"/><rect x="1745.7" y="495.7" width="29.8" height="31.2" fill="#eff6fd" stroke="#a8a8a8" stroke-width="1"/><rect x="1626.5" y="526.9" width="29.8" height="31.2" fill="#eff6fd" stroke="#a8a8a8" stroke-width="1"/><rect x="1656.3" y="526.9" width="29.8" height="31.2" fill="#eff6fd" stroke="#a8a8a8" stroke-width="1"/><rect x="1686.1" y="526.9" width="29.8" height="31.2" fill="#eff6fd" stroke="#a8a8a8" stroke-width="1"/><circle cx="1671.5" cy="355.5" r="174.5" fill="none" stroke="#606060" stroke-width="1"/><rect x="1596.7" y="183.7" width="29.8" height="31.2" fill="#c00000" stroke="#8a8a8a" stroke-width="1"/><rect x="1626.5" y="183.7" width="29.8" height="31.2" fill="#ffd700" stroke="#8a8a8a" stroke-width="1"/><rect x="1656.3" y="183.7" width="29.8" height="31.2" fill="#ffd700" stroke="#8a8a8a" stroke-width="1"/><rect x="1686.1" y="183.7" width="29.8" height="31.2" fill="#ffd700" stroke="#8a8a8a" stroke-width="1"/><rect x="1715.9" y="183.7" width="29.8" height="31.2" fill="#c00000" stroke="#8a8a8a" stroke-width="1"/><rect x="1566.9" y="214.9" width="29.8" height="31.2" fill="#c00000" stroke="#8a8a8a" stroke-width="1"/><rect x="1596.7" y="214.9" width="29.8" height="31.2" fill="#c00000" stroke="#8a8a8a" stroke-width="1"/><rect x="1626.5" y="214.9" width="29.8" height="31.2" fill="#c00000" stroke="#8a8a8a" stroke-width="1"/><rect x="1656.3" y="214.9" width="29.8" height="31.2" fill="#c00000" stroke="#8a8a8a" stroke-width="1"/><rect x="1686.1" y="214.9" width="29.8" height="31.2" fill="#c00000" stroke="#8a8a8a" stroke-width="1"/><rect x="1715.9" y="214.9" width="29.8" height="31.2" fill="#c00000" stroke="#8a8a8a" stroke-width="1"/><rect x="1745.7" y="214.9" width="29.8" height="31.2" fill="#c00000" stroke="#8a8a8a" stroke-width="1"/><rect x="1537.1" y="246.1" width="29.8" height="31.2" fill="#c00000" stroke="#8a8a8a" stroke-width="1"/><rect x="1566.9" y="246.1" width="29.8" height="31.2" fill="#c00000" stroke="#8a8a8a" stroke-width="1"/><rect x="1596.7" y="246.1" width="29.8" height="31.2" fill="#c00000" stroke="#8a8a8a" stroke-width="1"/><rect x="1626.5" y="246.1" width="29.8" height="31.2" fill="#c00000" stroke="#8a8a8a" stroke-width="1"/><rect x="1656.3" y="246.1" width="29.8" height="31.2" fill="#c00000" stroke="#8a8a8a" stroke-width="1"/><rect x="1686.1" y="246.1" width="29.8" height="31.2" fill="#c00000" stroke="#8a8a8a" stroke-width="1"/><rect x="1715.9" y="246.1" width="29.8" height="31.2" fill="#c00000" stroke="#8a8a8a" stroke-width="1"/><rect x="1745.7" y="246.1" width="29.8" height="31.2" fill="#c00000" stroke="#8a8a8a" stroke-width="1"/><rect x="1775.5" y="246.1" width="29.8" height="31.2" fill="#c00000" stroke="#8a8a8a" stroke-width="1"/><rect x="1507.3" y="277.3" width="29.8" height="31.2" fill="#c00000" stroke="#8a8a8a" stroke-width="1"/><rect x="1537.1" y="277.3" width="29.8" height="31.2" fill="#c00000" stroke="#8a8a8a" stroke-width="1"/><rect x="1566.9" y="277.3" width="29.8" height="31.2" fill="#ffd700" stroke="#8a8a8a" stroke-width="1"/><rect x="1596.7" y="277.3" width="29.8" height="31.2" fill="#ffd700" stroke="#8a8a8a" stroke-width="1"/><rect x="1626.5" y="277.3" width="29.8" height="31.2" fill="#ffd700" stroke="#8a8a8a" stroke-width="1"/><rect x="1656.3" y="277.3" width="29.8" height="31.2" fill="#ffd700" stroke="#8a8a8a" stroke-width="1"/><rect x="1686.1" y="277.3" width="29.8" height="31.2" fill="#c00000" stroke="#8a8a8a" stroke-width="1"/><rect x="1715.9" y="277.3" width="29.8" height="31.2" fill="#c00000" stroke="#8a8a8a" stroke-width="1"/><rect x="1745.7" y="277.3" width="29.8" height="31.2" fill="#c00000" stroke="#8a8a8a" stroke-width="1"/><rect x="1775.5" y="277.3" width="29.8" height="31.2" fill="#c00000" stroke="#8a8a8a" stroke-width="1"/><rect x="1805.3" y="277.3" width="29.8" height="31.2" fill="#c00000" stroke="#8a8a8a" stroke-width="1"/><rect x="1507.3" y="308.5" width="29.8" height="31.2" fill="#ffd700" stroke="#8a8a8a" stroke-width="1"/><rect x="1537.1" y="308.5" width="29.8" height="31.2" fill="#c00000" stroke="#8a8a8a" stroke-width="1"/><rect x="1566.9" y="308.5" width="29.8" height="31.2" fill="#c00000" stroke="#8a8a8a" stroke-width="1"/><rect x="1596.7" y="308.5" width="29.8" height="31.2" fill="#ffd700" stroke="#8a8a8a" stroke-width="1"/><rect x="1626.5" y="308.5" width="29.8" height="31.2" fill="#ffd700" stroke="#8a8a8a" stroke-width="1"/><rect x="1656.3" y="308.5" width="29.8" height="31.2" fill="#c00000" stroke="#8a8a8a" stroke-width="1"/><rect x="1686.1" y="308.5" width="29.8" height="31.2" fill="#c00000" stroke="#8a8a8a" stroke-width="1"/><rect x="1715.9" y="308.5" width="29.8" height="31.2" fill="#c00000" stroke="#8a8a8a" stroke-width="1"/><rect x="1745.7" y="308.5" width="29.8" height="31.2" fill="#c00000" stroke="#8a8a8a" stroke-width="1"/><rect x="1775.5" y="308.5" width="29.8" height="31.2" fill="#c00000" stroke="#8a8a8a" stroke-width="1"/><rect x="1805.3" y="308.5" width="29.8" height="31.2" fill="#c00000" stroke="#8a8a8a" stroke-width="1"/><rect x="1507.3" y="339.7" width="29.8" height="31.2" fill="#ffd700" stroke="#8a8a8a" stroke-width="1"/><rect x="1537.1" y="339.7" width="29.8" height="31.2" fill="#ffd700" stroke="#8a8a8a" stroke-width="1"/><rect x="1566.9" y="339.7" width="29.8" height="31.2" fill="#ffd700" stroke="#8a8a8a" stroke-width="1"/><rect x="1596.7" y="339.7" width="29.8" height="31.2" fill="#ffd700" stroke="#8a8a8a" stroke-width="1"/><rect x="1626.5" y="339.7" width="29.8" height="31.2" fill="#c00000" stroke="#8a8a8a" stroke-width="1"/><rect x="1656.3" y="339.7" width="29.8" height="31.2" fill="#c00000" stroke="#8a8a8a" stroke-width="1"/><rect x="1686.1" y="339.7" width="29.8" height="31.2" fill="#c00000" stroke="#8a8a8a" stroke-width="1"/><rect x="1715.9" y="339.7" width="29.8" height="31.2" fill="#c00000" stroke="#8a8a8a" stroke-width="1"/><rect x="1745.7" y="339.7" width="29.8" height="31.2" fill="#ffd700" stroke="#8a8a8a" stroke-width="1"/><rect x="1775.5" y="339.7" width="29.8" height="31.2" fill="#ffd700" stroke="#8a8a8a" stroke-width="1"/><rect x="1805.3" y="339.7" width="29.8" height="31.2" fill="#ffd700" stroke="#8a8a8a" stroke-width="1"/><rect x="1507.3" y="370.9" width="29.8" height="31.2" fill="#ffd700" stroke="#8a8a8a" stroke-width="1"/><rect x="1537.1" y="370.9" width="29.8" height="31.2" fill="#ffd700" stroke="#8a8a8a" stroke-width="1"/><rect x="1566.9" y="370.9" width="29.8" height="31.2" fill="#c00000" stroke="#8a8a8a" stroke-width="1"/><rect x="1596.7" y="370.9" width="29.8" height="31.2" fill="#ffd700" stroke="#8a8a8a" stroke-width="1"/><rect x="1626.5" y="370.9" width="29.8" height="31.2" fill="#ffd700" stroke="#8a8a8a" stroke-width="1"/><rect x="1656.3" y="370.9" width="29.8" height="31.2" fill="#ffd700" stroke="#8a8a8a" stroke-width="1"/><rect x="1686.1" y="370.9" width="29.8" height="31.2" fill="#c00000" stroke="#8a8a8a" stroke-width="1"/><rect x="1715.9" y="370.9" width="29.8" height="31.2" fill="#c00000" stroke="#8a8a8a" stroke-width="1"/><rect x="1745.7" y="370.9" width="29.8" height="31.2" fill="#c00000" stroke="#8a8a8a" stroke-width="1"/><rect x="1775.5" y="370.9" width="29.8" height="31.2" fill="#ffd700" stroke="#8a8a8a" stroke-width="1"/><rect x="1805.3" y="370.9" width="29.8" height="31.2" fill="#c00000" stroke="#8a8a8a" stroke-width="1"/><rect x="1507.3" y="402.1" width="29.8" height="31.2" fill="#c00000" stroke="#8a8a8a" stroke-width="1"/><rect x="1537.1" y="402.1" width="29.8" height="31.2" fill="#ffd700" stroke="#8a8a8a" stroke-width="1"/><rect x="1566.9" y="402.1" width="29.8" height="31.2" fill="#ffd700" stroke="#8a8a8a" stroke-width="1"/><rect x="1596.7" y="402.1" width="29.8" height="31.2" fill="#c00000" stroke="#8a8a8a" stroke-width="1"/><rect x="1626.5" y="402.1" width="29.8" height="31.2" fill="#c00000" stroke="#8a8a8a" stroke-width="1"/><rect x="1656.3" y="402.1" width="29.8" height="31.2" fill="#ffd700" stroke="#8a8a8a" stroke-width="1"/><rect x="1686.1" y="402.1" width="29.8" height="31.2" fill="#ffd700" stroke="#8a8a8a" stroke-width="1"/><rect x="1715.9" y="402.1" width="29.8" height="31.2" fill="#c00000" stroke="#8a8a8a" stroke-width="1"/><rect x="1745.7" y="402.1" width="29.8" height="31.2" fill="#c00000" stroke="#8a8a8a" stroke-width="1"/><rect x="1775.5" y="402.1" width="29.8" height="31.2" fill="#c00000" stroke="#8a8a8a" stroke-width="1"/><rect x="1537.1" y="433.3" width="29.8" height="31.2" fill="#c00000" stroke="#8a8a8a" stroke-width="1"/><rect x="1566.9" y="433.3" width="29.8" height="31.2" fill="#ffd700" stroke="#8a8a8a" stroke-width="1"/><rect x="1596.7" y="433.3" width="29.8" height="31.2" fill="#ffd700" stroke="#8a8a8a" stroke-width="1"/><rect x="1626.5" y="433.3" width="29.8" height="31.2" fill="#c00000" stroke="#8a8a8a" stroke-width="1"/><rect x="1656.3" y="433.3" width="29.8" height="31.2" fill="#c00000" stroke="#8a8a8a" stroke-width="1"/><rect x="1686.1" y="433.3" width="29.8" height="31.2" fill="#c00000" stroke="#8a8a8a" stroke-width="1"/><rect x="1715.9" y="433.3" width="29.8" height="31.2" fill="#c00000" stroke="#8a8a8a" stroke-width="1"/><rect x="1745.7" y="433.3" width="29.8" height="31.2" fill="#c00000" stroke="#8a8a8a" stroke-width="1"/><rect x="1775.5" y="433.3" width="29.8" height="31.2" fill="#c00000" stroke="#8a8a8a" stroke-width="1"/><rect x="1566.9" y="464.5" width="29.8" height="31.2" fill="#c00000" stroke="#8a8a8a" stroke-width="1"/><rect x="1596.7" y="464.5" width="29.8" height="31.2" fill="#ffd700" stroke="#8a8a8a" stroke-width="1"/><rect x="1626.5" y="464.5" width="29.8" height="31.2" fill="#ffd700" stroke="#8a8a8a" stroke-width="1"/><rect x="1656.3" y="464.5" width="29.8" height="31.2" fill="#ffd700" stroke="#8a8a8a" stroke-width="1"/><rect x="1686.1" y="464.5" width="29.8" height="31.2" fill="#ffd700" stroke="#8a8a8a" stroke-width="1"/><rect x="1715.9" y="464.5" width="29.8" height="31.2" fill="#c00000" stroke="#8a8a8a" stroke-width="1"/><rect x="1745.7" y="464.5" width="29.8" height="31.2" fill="#c00000" stroke="#8a8a8a" stroke-width="1"/><rect x="1626.5" y="495.7" width="29.8" height="31.2" fill="#c00000" stroke="#8a8a8a" stroke-width="1"/><rect x="1656.3" y="495.7" width="29.8" height="31.2" fill="#c00000" stroke="#8a8a8a" stroke-width="1"/></svg>
<div class="a" style="left:-1px;top:595px;width:953px;height:360px;border:1px solid #d5dfe8;background:#f0f0f0"></div>
<div class="ptitle" style="left:7px;top:600.5px;font-size:18px">Job Queue</div>
<div class="shadow" style="left:0;top:621px;width:950px"></div>
<div class="btn" style="left:714px;top:595px;width:46px;height:35px;background:linear-gradient(#f3f3f3 0,#efefef 28%,#dedede 29%,#d8d8d8 100%)"></div>
<svg class="a" style="left:723px;top:598.5px" width="28" height="28" viewBox="0 0 28 28">
<defs><linearGradient id="gb0" x1="0" y1="0" x2="0" y2="1"><stop offset="0" stop-color="#c8e6f8"/><stop offset=".45" stop-color="#8cc0ea"/><stop offset="1" stop-color="#4f90d4"/></linearGradient></defs>
<circle cx="14" cy="14" r="13.3" fill="url(#gb0)" stroke="#3b78bf" stroke-width="1"/><path d="M11.5 6 L16.5 6 L16.5 11.5 L22 11.5 L22 16.5 L16.5 16.5 L16.5 22 L11.5 22 L11.5 16.5 L6 16.5 L6 11.5 L11.5 11.5 Z" fill="#f4f6fb" stroke="#3a78c0" stroke-width="1" stroke-linejoin="round"/></svg>
<div class="btn" style="left:770px;top:595px;width:46px;height:35px;background:linear-gradient(#f3f3f3 0,#efefef 28%,#dedede 29%,#d8d8d8 100%)"></div>
<svg class="a" style="left:779px;top:598.5px" width="28" height="28" viewBox="0 0 28 28">
<defs><linearGradient id="gb1" x1="0" y1="0" x2="0" y2="1"><stop offset="0" stop-color="#c8e6f8"/><stop offset=".45" stop-color="#8cc0ea"/><stop offset="1" stop-color="#4f90d4"/></linearGradient></defs>
<circle cx="14" cy="14" r="13.3" fill="url(#gb1)" stroke="#3b78bf" stroke-width="1"/><rect x="6.3" y="11.3" width="15.4" height="5.4" rx="1.6" fill="#f4f6fb" stroke="#3a78c0" stroke-width="1"/></svg>
<div class="btn" style="left:826px;top:595px;width:46px;height:35px;background:linear-gradient(#f3f3f3 0,#efefef 28%,#dedede 29%,#d8d8d8 100%)"></div>
<svg class="a" style="left:836px;top:600px" width="25" height="27" viewBox="0 0 25 27">
<defs><linearGradient id="gd" x1="0" y1="0" x2="0" y2="1"><stop offset="0" stop-color="#d2eaf9"/><stop offset=".5" stop-color="#9ccbee"/><stop offset="1" stop-color="#5e9fdc"/></linearGradient></defs>
<path d="M8.6 1.2 L18.1 1.2 L18.1 10 L22.8 10 L13.3 25.4 L2.1 10 L8.6 10 Z" fill="url(#gd)" stroke="#5b98d6" stroke-width="1"/></svg>
<div class="btn" style="left:882px;top:595px;width:46px;height:35px;background:linear-gradient(#f3f3f3 0,#efefef 28%,#dedede 29%,#d8d8d8 100%)"></div>
<svg class="a" style="left:892px;top:599px" width="25" height="27" viewBox="0 0 25 27">
<defs><linearGradient id="gu" x1="0" y1="0" x2="0" y2="1"><stop offset="0" stop-color="#d2eaf9"/><stop offset=".5" stop-color="#9ccbee"/><stop offset="1" stop-color="#5e9fdc"/></linearGradient></defs>
<path d="M12.3 1 L22.9 17.6 L17.6 17.6 L17.6 25.8 L7.6 25.8 L7.6 17.6 L1.6 17.6 Z" fill="url(#gu)" stroke="#5b98d6" stroke-width="1"/></svg>
<div class="a" style="left:4px;top:636px;width:940px;height:302px;border:1px solid #d2d2d2;background:#fff;overflow:hidden">
<div class="a" style="left:0;top:0;width:939px;height:27px;background:linear-gradient(#fff 0,#fff 40%,#f4f6f8 55%,#eef0f3 100%);border-bottom:1px solid #d5d5d5"></div>
<div class="a" style="left:0px;top:6px;width:134px;text-align:center;font-size:12.5px;line-height:15px;white-space:nowrap">Job ID</div>
<div class="a" style="left:133px;top:0;width:1px;height:27px;background:#dedede"></div>
<div class="a" style="left:134px;top:6px;width:134px;text-align:center;font-size:12.5px;line-height:15px;white-space:nowrap">Carrier ID</div>
<div class="a" style="left:267px;top:0;width:1px;height:27px;background:#dedede"></div>
<div class="a" style="left:268px;top:6px;width:134px;text-align:center;font-size:12.5px;line-height:15px;white-space:nowrap">Status</div>
<div class="a" style="left:401px;top:0;width:1px;height:27px;background:#dedede"></div>
<div class="a" style="left:402px;top:6px;width:134px;text-align:center;font-size:12.5px;line-height:15px;white-space:nowrap">Lot ID</div>
<div class="a" style="left:535px;top:0;width:1px;height:27px;background:#dedede"></div>
<div class="a" style="left:536px;top:6px;width:134px;text-align:center;font-size:12.5px;line-height:15px;white-space:nowrap">Wafers</div>
<div class="a" style="left:669px;top:0;width:1px;height:27px;background:#dedede"></div>
<div class="a" style="left:670px;top:6px;width:134px;text-align:center;font-size:12.5px;line-height:15px;white-space:nowrap">Recipe</div>
<div class="a" style="left:803px;top:0;width:1px;height:27px;background:#dedede"></div>
<div class="a" style="left:804px;top:6px;width:134px;text-align:center;font-size:12.5px;line-height:15px;white-space:nowrap">Loadport</div>
</div>
<div class="a" style="left:960px;top:595px;width:944px;height:360px;border:1px solid #d5dfe8;background:#f0f0f0"></div>
<div class="ptitle" style="left:972px;top:600px;font-size:18px;letter-spacing:.15px">Job History</div>
<div class="shadow" style="left:962px;top:621px;width:935px"></div>
<svg class="a" style="left:1812px;top:604px" width="23" height="23" viewBox="0 0 23 23">
<defs><radialGradient id="gmag" cx=".35" cy=".3" r=".75"><stop offset="0" stop-color="#e9f1fb"/><stop offset=".45" stop-color="#8ab2e6"/><stop offset="1" stop-color="#3f6fc0"/></radialGradient></defs>
<rect x="1" y="1" width="20.5" height="20.5" rx="2.5" fill="none" stroke="#555" stroke-width="1"/>
<circle cx="9.5" cy="9.5" r="8.5" fill="url(#gmag)" stroke="#dfe8f3" stroke-width="1.4"/>
<path d="M15.5 15.5 L20 20" stroke="#6f8fb8" stroke-width="2.5"/><path d="M19 19 L21 21" stroke="#f39a2a" stroke-width="2"/></svg>
<div class="a t12" style="left:1846px;top:611px;line-height:14px">Count:20</div>
<div class="a" style="left:962px;top:630px;width:939px;height:312px;border:1px solid #d2d2d2;background:#fff;overflow:hidden">
<div class="a" style="left:0;top:0;width:937px;height:27px;background:linear-gradient(#fff 0,#fff 40%,#f4f6f8 55%,#eef0f3 100%);border-bottom:1px solid #d5d5d5"></div>
<div class="a" style="left:0;top:27px;width:921px;height:61px;background:#ababab;border-bottom:1px solid #dcdcdc"></div>
<div class="a" style="left:4px;top:49.5px;font-size:12.5px;line-height:16px;white-space:pre">PFP09669</div>
<svg class="a" style="left:111px;top:51.0px" width="13" height="13" viewBox="0 0 13 13"><circle cx="6.5" cy="6.5" r="6" fill="#d81e1e"/><circle cx="6.5" cy="5.5" r="4.5" fill="#ee4a4a"/><path d="M4.2 4.2 L8.8 8.8 M8.8 4.2 L4.2 8.8" stroke="#fff" stroke-width="1.8"/></svg>
<div class="a" style="left:127px;top:49.5px;font-size:12.5px;line-height:16px;white-space:pre">LP1Wafe...</div>
<div class="a" style="left:198px;top:49.5px;font-size:12.5px;line-height:16px;white-space:pre">Failed</div>
<div class="a" style="left:285px;top:49.5px;font-size:12.5px;line-height:16px;white-space:pre"> Failed Mark C...</div>
<div class="a" style="left:383px;top:49.5px;font-size:12.5px;line-height:16px;white-space:pre">Product\TQV2.0\...</div>
<div class="a" style="left:502px;top:49.5px;font-size:12.5px;line-height:16px;white-space:pre">2025/10/21/10:08...</div>
<div class="a" style="left:628px;top:28px;font-size:12.5px;line-height:14px;white-space:pre">X:18553.32<br>Y:20746.14</div>
<div class="a" style="left:703px;top:28px;font-size:12.5px;line-height:14px;white-space:pre">X:-20843.9<br>6<br><span style="margin-left:2px">Y:-20120.2</span><br>2</div>
<div class="a" style="left:778px;top:28px;font-size:12.5px;line-height:14px;white-space:pre">X:-532.89<br><span style="margin-left:2px">Y:-5338.49</span></div>
<div class="a" style="left:852px;top:28px;font-size:12.5px;line-height:14px;white-space:pre">X:26498.30<br>Y:24231.17</div>
<div class="a" style="left:0;top:88px;width:921px;height:33px;background:#eef5fd;border-bottom:1px solid #dcdcdc"></div>
<div class="a" style="left:4px;top:96.5px;font-size:12.5px;line-height:16px;white-space:pre">PFP16516</div>
<div class="a" style="left:111px;top:96.5px;font-size:12.5px;line-height:16px;white-space:pre">LP1Wafer22</div>
<div class="a" style="left:198px;top:96.5px;font-size:12.5px;line-height:16px;white-space:pre">Pass</div>
<div class="a" style="left:285px;top:96.5px;font-size:12.5px;line-height:16px;white-space:pre">(296/288)</div>
<div class="a" style="left:383px;top:96.5px;font-size:12.5px;line-height:16px;white-space:pre">Product\WSH\WS...</div>
<div class="a" style="left:502px;top:96.5px;font-size:12.5px;line-height:16px;white-space:pre">2025/10/19/20:08...</div>
<div class="a" style="left:628px;top:91px;font-size:12.5px;line-height:14px;white-space:pre">X:876.78<br>Y:1495.67</div>
<div class="a" style="left:703px;top:91px;font-size:12.5px;line-height:14px;white-space:pre">X:-2116.66<br>Y:-585.39</div>
<div class="a" style="left:778px;top:91px;font-size:12.5px;line-height:14px;white-space:pre">X:-295.05<br>Y:216.99</div>
<div class="a" style="left:852px;top:91px;font-size:12.5px;line-height:14px;white-space:pre">X:2035.08<br>Y:1030.50</div>
<div class="a" style="left:0;top:121px;width:921px;height:33px;background:#ffffff;border-bottom:1px solid #dcdcdc"></div>
<div class="a" style="left:4px;top:129.5px;font-size:12.5px;line-height:16px;white-space:pre">PFP16516</div>
<svg class="a" style="left:111px;top:131.0px" width="13" height="13" viewBox="0 0 13 13"><circle cx="6.5" cy="6.5" r="6" fill="#d81e1e"/><circle cx="6.5" cy="5.5" r="4.5" fill="#ee4a4a"/><path d="M4.2 4.2 L8.8 8.8 M8.8 4.2 L4.2 8.8" stroke="#fff" stroke-width="1.8"/></svg>
<div class="a" style="left:127px;top:129.5px;font-size:12.5px;line-height:16px;white-space:pre">LP1Wafe...</div>
<div class="a" style="left:198px;top:129.5px;font-size:12.5px;line-height:16px;white-space:pre">Failed</div>
<div class="a" style="left:285px;top:129.5px;font-size:12.5px;line-height:16px;white-space:pre"> Failed Mark C...</div>
<div class="a" style="left:383px;top:129.5px;font-size:12.5px;line-height:16px;white-space:pre">Product\WSH\WS...</div>
<div class="a" style="left:502px;top:129.5px;font-size:12.5px;line-height:16px;white-space:pre">2025/10/19/18:54...</div>
<div class="a" style="left:628px;top:124px;font-size:12.5px;line-height:14px;white-space:pre">X:-130.24<br>Y:1228.52</div>
<div class="a" style="left:703px;top:124px;font-size:12.5px;line-height:14px;white-space:pre">X:-2077.68<br>Y:-260.99</div>
<div class="a" style="left:778px;top:124px;font-size:12.5px;line-height:14px;white-space:pre">X:-888.57<br>Y:453.03</div>
<div class="a" style="left:852px;top:124px;font-size:12.5px;line-height:14px;white-space:pre">X:1485.95<br>Y:816.05</div>
<div class="a" style="left:0;top:154px;width:921px;height:33px;background:#eef5fd;border-bottom:1px solid #dcdcdc"></div>
<div class="a" style="left:4px;top:162.5px;font-size:12.5px;line-height:16px;white-space:pre">PFP06447</div>
<div class="a" style="left:111px;top:162.5px;font-size:12.5px;line-height:16px;white-space:pre">LP1Wafer10</div>
<div class="a" style="left:198px;top:162.5px;font-size:12.5px;line-height:16px;white-space:pre">Pass</div>
<div class="a" style="left:285px;top:162.5px;font-size:12.5px;line-height:16px;white-space:pre">(682/648)</div>
<div class="a" style="left:383px;top:162.5px;font-size:12.5px;line-height:16px;white-space:pre">Product\YWZ\PH...</div>
<div class="a" style="left:502px;top:162.5px;font-size:12.5px;line-height:16px;white-space:pre">2025/10/17/09:32...</div>
<div class="a" style="left:628px;top:157px;font-size:12.5px;line-height:14px;white-space:pre">X:511.34<br>Y:631.78</div>
<div class="a" style="left:703px;top:157px;font-size:12.5px;line-height:14px;white-space:pre">X:-1792.69<br>Y:-837.74</div>
<div class="a" style="left:778px;top:157px;font-size:12.5px;line-height:14px;white-space:pre">X:-653.21<br>Y:-138.08</div>
<div class="a" style="left:852px;top:157px;font-size:12.5px;line-height:14px;white-space:pre">X:1946.89<br>Y:1037.62</div>
<div class="a" style="left:0;top:187px;width:921px;height:33px;background:#ffffff;border-bottom:1px solid #dcdcdc"></div>
<div class="a" style="left:4px;top:195.5px;font-size:12.5px;line-height:16px;white-space:pre">PFP06447</div>
<div class="a" style="left:111px;top:195.5px;font-size:12.5px;line-height:16px;white-space:pre">LP1Wafer11</div>
<div class="a" style="left:198px;top:195.5px;font-size:12.5px;line-height:16px;white-space:pre">Pass</div>
<div class="a" style="left:285px;top:195.5px;font-size:12.5px;line-height:16px;white-space:pre">(682/627)</div>
<div class="a" style="left:383px;top:195.5px;font-size:12.5px;line-height:16px;white-space:pre">Product\YWZ\PH...</div>
<div class="a" style="left:502px;top:195.5px;font-size:12.5px;line-height:16px;white-space:pre">2025/10/17/09:10...</div>
<div class="a" style="left:628px;top:190px;font-size:12.5px;line-height:14px;white-space:pre">X:583.16<br>Y:457.07</div>
<div class="a" style="left:703px;top:190px;font-size:12.5px;line-height:14px;white-space:pre">X:-1741.95<br>Y:-894.75</div>
<div class="a" style="left:778px;top:190px;font-size:12.5px;line-height:14px;white-space:pre">X:-618.62<br>Y:-217.10</div>
<div class="a" style="left:852px;top:190px;font-size:12.5px;line-height:14px;white-space:pre">X:2047.50<br>Y:986.57</div>
<div class="a" style="left:0;top:220px;width:921px;height:33px;background:#eef5fd;border-bottom:1px solid #dcdcdc"></div>
<div class="a" style="left:4px;top:228.5px;font-size:12.5px;line-height:16px;white-space:pre">PPM240#10</div>
<div class="a" style="left:111px;top:228.5px;font-size:12.5px;line-height:16px;white-space:pre">LP1Wafer10</div>
<div class="a" style="left:198px;top:228.5px;font-size:12.5px;line-height:16px;white-space:pre">Pass</div>
<div class="a" style="left:285px;top:228.5px;font-size:12.5px;line-height:16px;white-space:pre">(76/72)</div>
<div class="a" style="left:383px;top:228.5px;font-size:12.5px;line-height:16px;white-space:pre">PHWB56D2W_MI...</div>
<div class="a" style="left:502px;top:228.5px;font-size:12.5px;line-height:16px;white-space:pre">2025/10/16/18:42...</div>
<div class="a" style="left:628px;top:223px;font-size:12.5px;line-height:14px;white-space:pre">X:-167.87<br>Y:592.39</div>
<div class="a" style="left:703px;top:223px;font-size:12.5px;line-height:14px;white-space:pre">X:-1069.69<br>Y:-501.23</div>
<div class="a" style="left:778px;top:223px;font-size:12.5px;line-height:14px;white-space:pre">X:-586.94<br>Y:124.38</div>
<div class="a" style="left:852px;top:223px;font-size:12.5px;line-height:14px;white-space:pre">X:881.23<br>Y:817.34</div>
<div class="a" style="left:0;top:253px;width:921px;height:33px;background:#ffffff;border-bottom:1px solid #dcdcdc"></div>
<div class="a" style="left:4px;top:261.5px;font-size:12.5px;line-height:16px;white-space:pre">PPM240#10</div>
<div class="a" style="left:111px;top:261.5px;font-size:12.5px;line-height:16px;white-space:pre">LP1Wafer10</div>
<div class="a" style="left:198px;top:261.5px;font-size:12.5px;line-height:16px;white-space:pre">Pass</div>
<div class="a" style="left:285px;top:261.5px;font-size:12.5px;line-height:16px;white-space:pre">(57/57)</div>
<div class="a" style="left:383px;top:261.5px;font-size:12.5px;line-height:16px;white-space:pre">PHWB56D2W_MI...</div>
<div class="a" style="left:502px;top:261.5px;font-size:12.5px;line-height:16px;white-space:pre">2025/10/16/17:05...</div>
<div class="a" style="left:628px;top:256px;font-size:12.5px;line-height:14px;white-space:pre">X:512.93<br>Y:-6.32</div>
<div class="a" style="left:703px;top:256px;font-size:12.5px;line-height:14px;white-space:pre">X:-562.24<br>Y:-741.47</div>
<div class="a" style="left:778px;top:256px;font-size:12.5px;line-height:14px;white-space:pre">X:15.38<br>Y:-414.80</div>
<div class="a" style="left:852px;top:256px;font-size:12.5px;line-height:14px;white-space:pre">X:905.93<br>Y:621.81</div>
<div class="a" style="left:0;top:286px;width:921px;height:33px;background:#eef5fd;border-bottom:1px solid #dcdcdc"></div>
<div class="a" style="left:4px;top:294.5px;font-size:12.5px;line-height:16px;white-space:pre">PPM240#10</div>
<div class="a" style="left:111px;top:294.5px;font-size:12.5px;line-height:16px;white-space:pre">LP1Wafer10</div>
<div class="a" style="left:198px;top:294.5px;font-size:12.5px;line-height:16px;white-space:pre">Abort</div>
<div class="a" style="left:383px;top:294.5px;font-size:12.5px;line-height:16px;white-space:pre">PHWB56D2W_MI...</div>
<div class="a" style="left:502px;top:294.5px;font-size:12.5px;line-height:16px;white-space:pre">2025/10/16/17:02...</div>
<div class="a" style="left:628px;top:289px;font-size:12.5px;line-height:14px;white-space:pre">X:NaN<br>Y:NaN</div>
<div class="a" style="left:703px;top:289px;font-size:12.5px;line-height:14px;white-space:pre">X:NaN<br>Y:NaN</div>
<div class="a" style="left:778px;top:289px;font-size:12.5px;line-height:14px;white-space:pre">X:NaN<br>Y:NaN</div>
<div class="a" style="left:852px;top:289px;font-size:12.5px;line-height:14px;white-space:pre">X:NaN<br>Y:NaN</div>
<div class="a" style="left:106px;top:0;width:1px;height:312px;background:#dcdcdc"></div>
<div class="a" style="left:193px;top:0;width:1px;height:312px;background:#dcdcdc"></div>
<div class="a" style="left:280px;top:0;width:1px;height:312px;background:#dcdcdc"></div>
<div class="a" style="left:378px;top:0;width:1px;height:312px;background:#dcdcdc"></div>
<div class="a" style="left:497px;top:0;width:1px;height:312px;background:#dcdcdc"></div>
<div class="a" style="left:622px;top:0;width:1px;height:312px;background:#dcdcdc"></div>
<div class="a" style="left:697px;top:0;width:1px;height:312px;background:#dcdcdc"></div>
<div class="a" style="left:772px;top:0;width:1px;height:312px;background:#dcdcdc"></div>
<div class="a" style="left:846px;top:0;width:1px;height:312px;background:#dcdcdc"></div>
<div class="a" style="left:920px;top:0;width:1px;height:312px;background:#dcdcdc"></div>
<div class="a" style="left:5px;top:6px;font-size:12.5px;line-height:15px;white-space:nowrap">Lot ID</div>
<div class="a" style="left:112px;top:6px;font-size:12.5px;line-height:15px;white-space:nowrap">Wafer ID</div>
<div class="a" style="left:199px;top:6px;font-size:12.5px;line-height:15px;white-space:nowrap">Status</div>
<div class="a" style="left:286px;top:6px;font-size:12.5px;line-height:15px;white-space:nowrap">Description</div>
<div class="a" style="left:384px;top:6px;font-size:12.5px;line-height:15px;white-space:nowrap">Recipe</div>
<div class="a" style="left:503px;top:6px;font-size:12.5px;line-height:15px;white-space:nowrap">Start Time</div>
<div class="a" style="left:628px;top:6px;font-size:12.5px;line-height:15px;white-space:nowrap">Max</div>
<div class="a" style="left:703px;top:6px;font-size:12.5px;line-height:15px;white-space:nowrap">Min</div>
<div class="a" style="left:778px;top:6px;font-size:12.5px;line-height:15px;white-space:nowrap">Mean</div>
<div class="a" style="left:852px;top:6px;font-size:12.5px;line-height:15px;white-space:nowrap">3Sigma</div>
<svg class="a" style="left:609px;top:12px" width="8" height="5"><path d="M0 0 L7 0 L3.5 4 Z" fill="#222"/></svg>
<div class="a" style="left:921px;top:27px;width:17px;height:285px;background:#f0f0f0"></div>
<svg class="a" style="left:926px;top:33px" width="8" height="5"><path d="M0 4 L4 0 L8 4 Z" fill="#555"/></svg>
<svg class="a" style="left:926px;top:299px" width="8" height="5"><path d="M0 0 L8 0 L4 4 Z" fill="#555"/></svg>
<div class="a" style="left:922px;top:45px;width:15px;height:87px;border:1px solid #a0a0a0;border-radius:2px;background:linear-gradient(90deg,#f4f4f4,#e4e4e4 50%,#d8d8d8)"></div>
<div class="a" style="left:926px;top:87px;width:7px;height:1px;background:#555;box-shadow:0 2px 0 #555,0 4px 0 #555"></div>
</div>
</body></html>
